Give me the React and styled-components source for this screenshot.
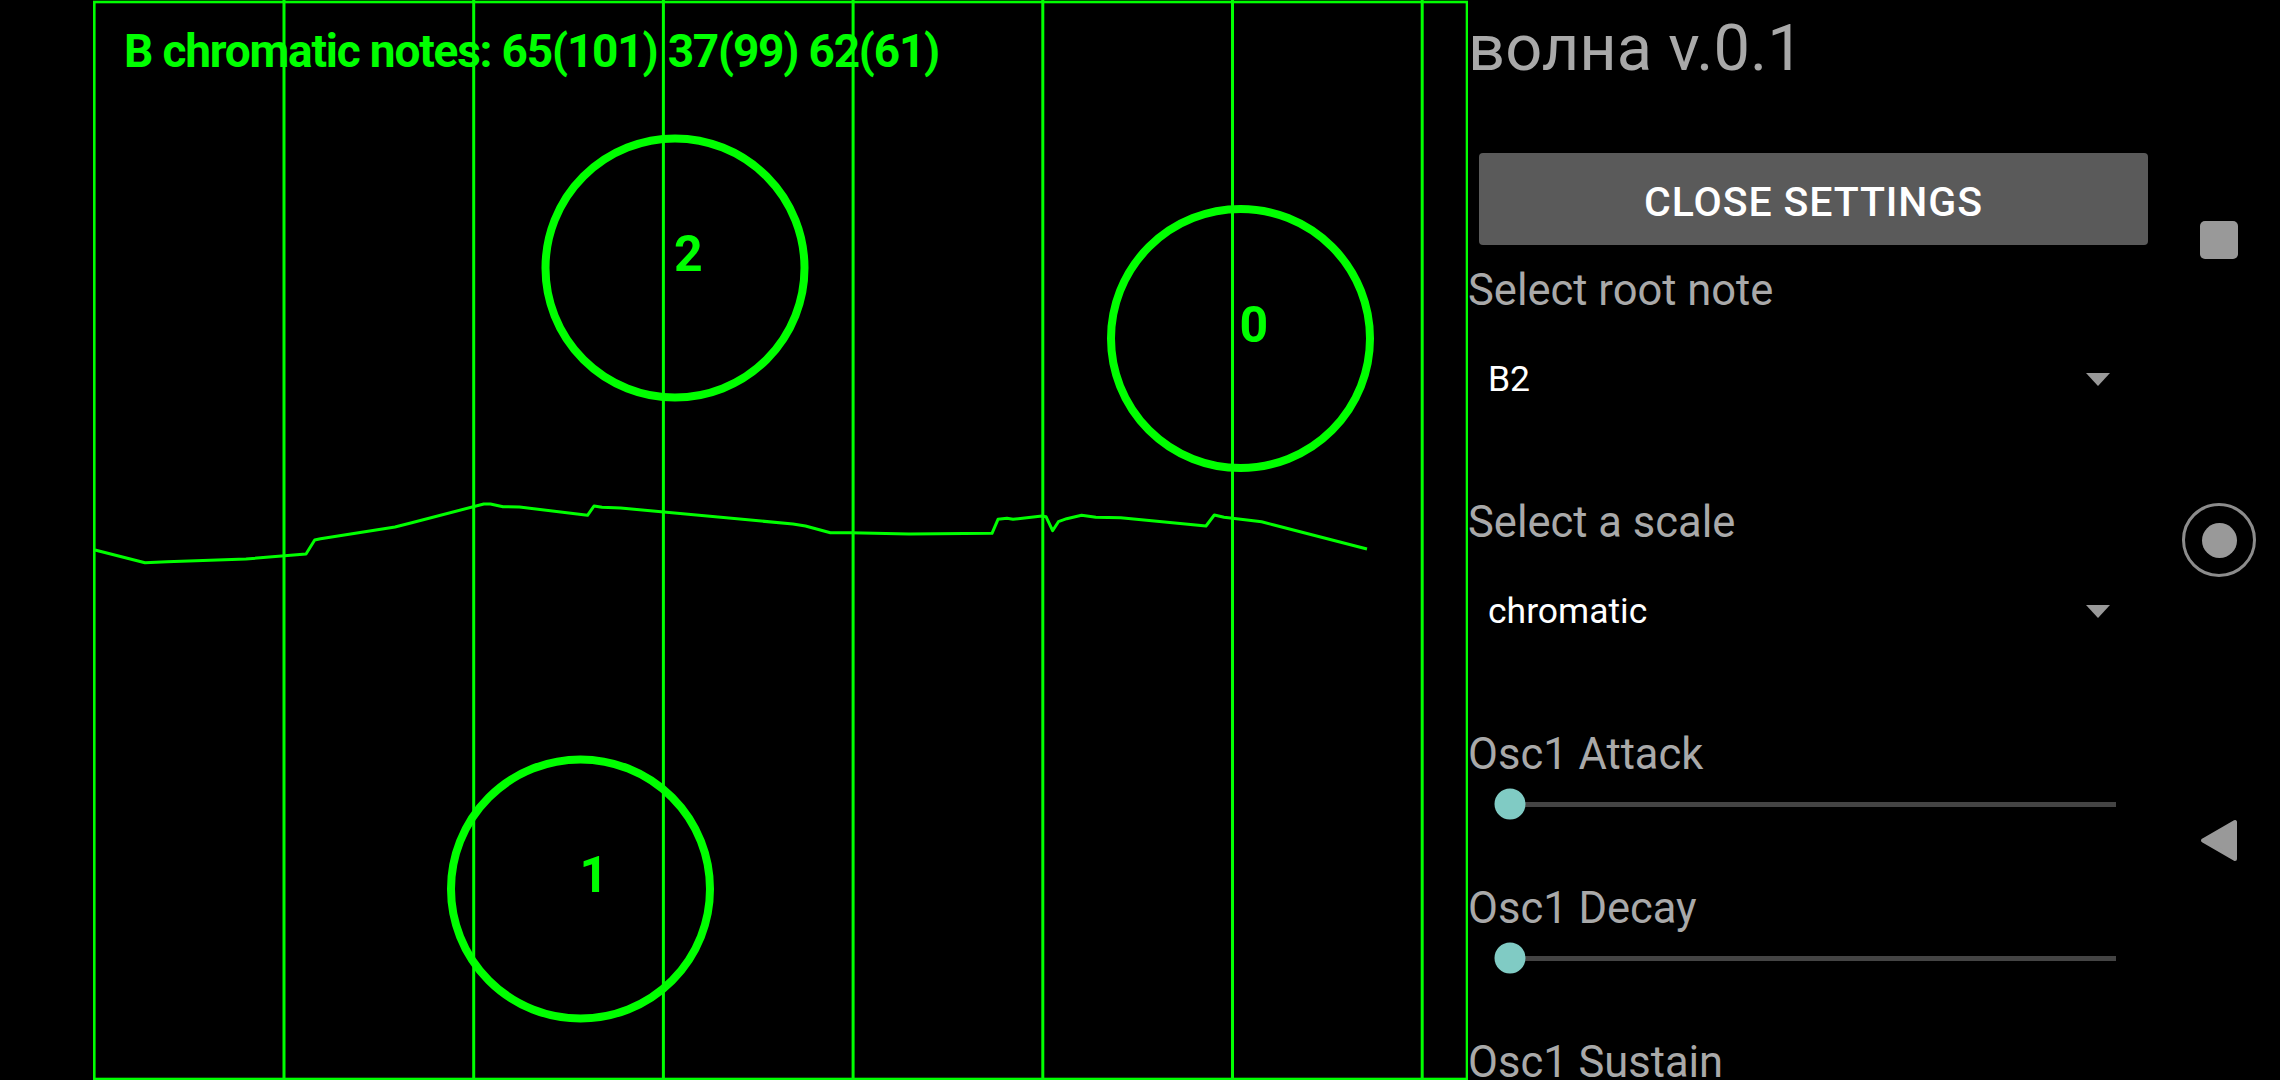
import React from 'react';
import styled, { createGlobalStyle } from 'styled-components';

const GREEN = '#00ff00';
const OFFSET = 93; // scope starts here, left of it is the camera cutout

const GlobalStyle = createGlobalStyle`
  html, body {
    margin: 0;
    padding: 0;
    background: #000;
  }
  body {
    font-family: Roboto, "Noto Sans", "Liberation Sans", sans-serif;
  }
`;

const Screen = styled.div`
  display: flex;
  width: 2280px;
  height: 1080px;
  background: #000;
  overflow: hidden;
`;

const Cutout = styled.div`
  width: ${OFFSET}px;
  flex: none;
`;

const Scope = styled.div`
  width: 1375px;
  height: 1080px;
  flex: none;

  svg {
    display: block;
  }
`;

const Panel = styled.div`
  width: 690px;
  flex: none;
  display: flex;
  flex-direction: column;
  overflow: hidden;
`;

const Title = styled.h1`
  margin: 8px 0 0 0;
  font-size: 65px;
  line-height: 80px;
  font-weight: 400;
  color: #a9a9a9;
  white-space: nowrap;
`;

const CloseButton = styled.button`
  margin: 65px 10px 0 11px;
  height: 92px;
  flex: none;
  border: none;
  border-radius: 4px;
  background: #5a5a5a;
  color: #fff;
  font-family: Roboto, "Noto Sans", sans-serif;
  font-weight: 500;
  font-size: 41px;
  letter-spacing: 0.9px;
  padding: 6px 0 0 0;
  display: flex;
  align-items: center;
  justify-content: center;
`;

const Label = styled.div`
  margin-top: ${(p) => (p.$first ? 21 : 56)}px;
  font-size: 43.5px;
  line-height: 50px;
  color: #a9a9a9;
  white-space: nowrap;
`;

const Spinner = styled.div`
  height: 126px;
  flex: none;
  display: flex;
  align-items: center;
  justify-content: space-between;
  padding: 0 48px 0 20px;
  font-size: 35.5px;
  color: #fff;
`;

const Arrow = styled.span`
  width: 0;
  height: 0;
  border-left: 12.5px solid transparent;
  border-right: 12.5px solid transparent;
  border-top: 13px solid #999;
`;

const SliderRow = styled.div`
  height: 48px;
  flex: none;
  display: flex;
  align-items: center;
  padding: 0 42px;
`;

const Track = styled.div`
  position: relative;
  flex: 1;
  height: 5px;
  background: #444;
`;

const Thumb = styled.span`
  position: absolute;
  left: ${(p) => p.$value * 100}%;
  top: 50%;
  width: 31px;
  height: 31px;
  border-radius: 50%;
  background: #80cbc4;
  transform: translate(-50%, -50%);
`;

const NavBar = styled.nav`
  width: 122px;
  flex: none;
  box-sizing: border-box;
  padding: 90px 0;
  display: grid;
  grid-template-rows: repeat(3, 300px);
  justify-items: center;
  align-items: center;
`;

const RecentsKey = styled.span`
  width: 38px;
  height: 38px;
  border-radius: 5px;
  background: #999;
`;

const HomeKey = styled.span`
  width: 74px;
  height: 74px;
  box-sizing: border-box;
  border-radius: 50%;
  border: 3px solid #8c8c8c;
  display: flex;
  align-items: center;
  justify-content: center;

  &::after {
    content: '';
    width: 35px;
    height: 35px;
    border-radius: 50%;
    background: #999;
  }
`;

const wave = [
  [95, 550], [145, 562.7], [167, 561.7], [246, 559], [306, 554], [314.7, 540],
  [320.5, 538.7], [395, 527], [411.7, 522.7], [483.8, 504], [490.4, 504],
  [503, 506.7], [519.5, 507], [587.5, 515.3], [594, 506], [602, 507.3],
  [620.6, 508], [793, 524], [805.5, 526], [830.4, 532.7], [851, 532.7],
  [909, 534], [992, 533.3], [998, 519.3], [1007, 518.3], [1013, 519.3],
  [1042, 516], [1046, 516.7], [1052.6, 530.7], [1058.4, 521.7], [1066.7, 518.7],
  [1081.6, 515.3], [1095.8, 517.3], [1120.7, 517.7], [1206, 526], [1214.3, 515],
  [1224, 517.3], [1261.6, 521.7], [1274, 525], [1367, 549],
];

const voices = [
  { id: 0, x: 1240.5, y: 338.5 },
  { id: 1, x: 580.5, y: 889 },
  { id: 2, x: 675, y: 268 },
];

const gridLines = Array.from({ length: 7 }, (_, i) => 94.3 + 189.7 * (i + 1));

function ScopeView() {
  const pts = wave.map(([x, y]) => `${x - OFFSET},${y}`).join(' ');
  return (
    <Scope>
      <svg width="1375" height="1080" viewBox="0 0 1375 1080">
        <rect x="1.3" y="2" width="1372.7" height="1077" fill="none" stroke={GREEN} strokeWidth="2.6" />
        {gridLines.map((x) => (
          <line key={x} x1={x - OFFSET} y1="0" x2={x - OFFSET} y2="1080" stroke={GREEN} strokeWidth="3" />
        ))}
        <polyline points={pts} fill="none" stroke={GREEN} strokeWidth="3" strokeLinejoin="round" />
        {voices.map((v) => (
          <g key={v.id}>
            <circle cx={v.x - OFFSET} cy={v.y} r="129.5" fill="none" stroke={GREEN} strokeWidth="8" />
            <text
              x={v.x - OFFSET - 1}
              y={v.y + 3}
              fill={GREEN}
              fontFamily="Roboto, 'Noto Sans', sans-serif"
              fontWeight="700"
              fontSize="50"
            >
              {v.id}
            </text>
          </g>
        ))}
        <text
          x={124 - OFFSET}
          y="67"
          fill={GREEN}
          fontFamily="Roboto, 'Noto Sans', sans-serif"
          fontWeight="700"
          fontSize="46"
          letterSpacing="-1.2"
        >
          B chromatic notes: 65(101) 37(99) 62(61)
        </text>
      </svg>
    </Scope>
  );
}

function Select({ value }) {
  return (
    <Spinner>
      <span>{value}</span>
      <Arrow />
    </Spinner>
  );
}

function Slider({ value }) {
  return (
    <SliderRow>
      <Track>
        <Thumb $value={value} />
      </Track>
    </SliderRow>
  );
}

export default function App() {
  return (
    <>
      <GlobalStyle />
      <Screen>
        <Cutout />
        <ScopeView />
        <Panel>
          <Title>волна v.0.1</Title>
          <CloseButton>CLOSE SETTINGS</CloseButton>
          <Label $first>Select root note</Label>
          <Select value="B2" />
          <Label>Select a scale</Label>
          <Select value="chromatic" />
          <Label>Osc1 Attack</Label>
          <Slider value={0} />
          <Label>Osc1 Decay</Label>
          <Slider value={0} />
          <Label>Osc1 Sustain</Label>
          <Slider value={0} />
        </Panel>
        <NavBar>
          <RecentsKey />
          <HomeKey />
          <svg width="40" height="45" viewBox="0 0 40 45">
            <path d="M4 22.5 L36 4 L36 41 Z" fill="#999" stroke="#999" strokeWidth="4" strokeLinejoin="round" />
          </svg>
        </NavBar>
      </Screen>
    </>
  );
}
